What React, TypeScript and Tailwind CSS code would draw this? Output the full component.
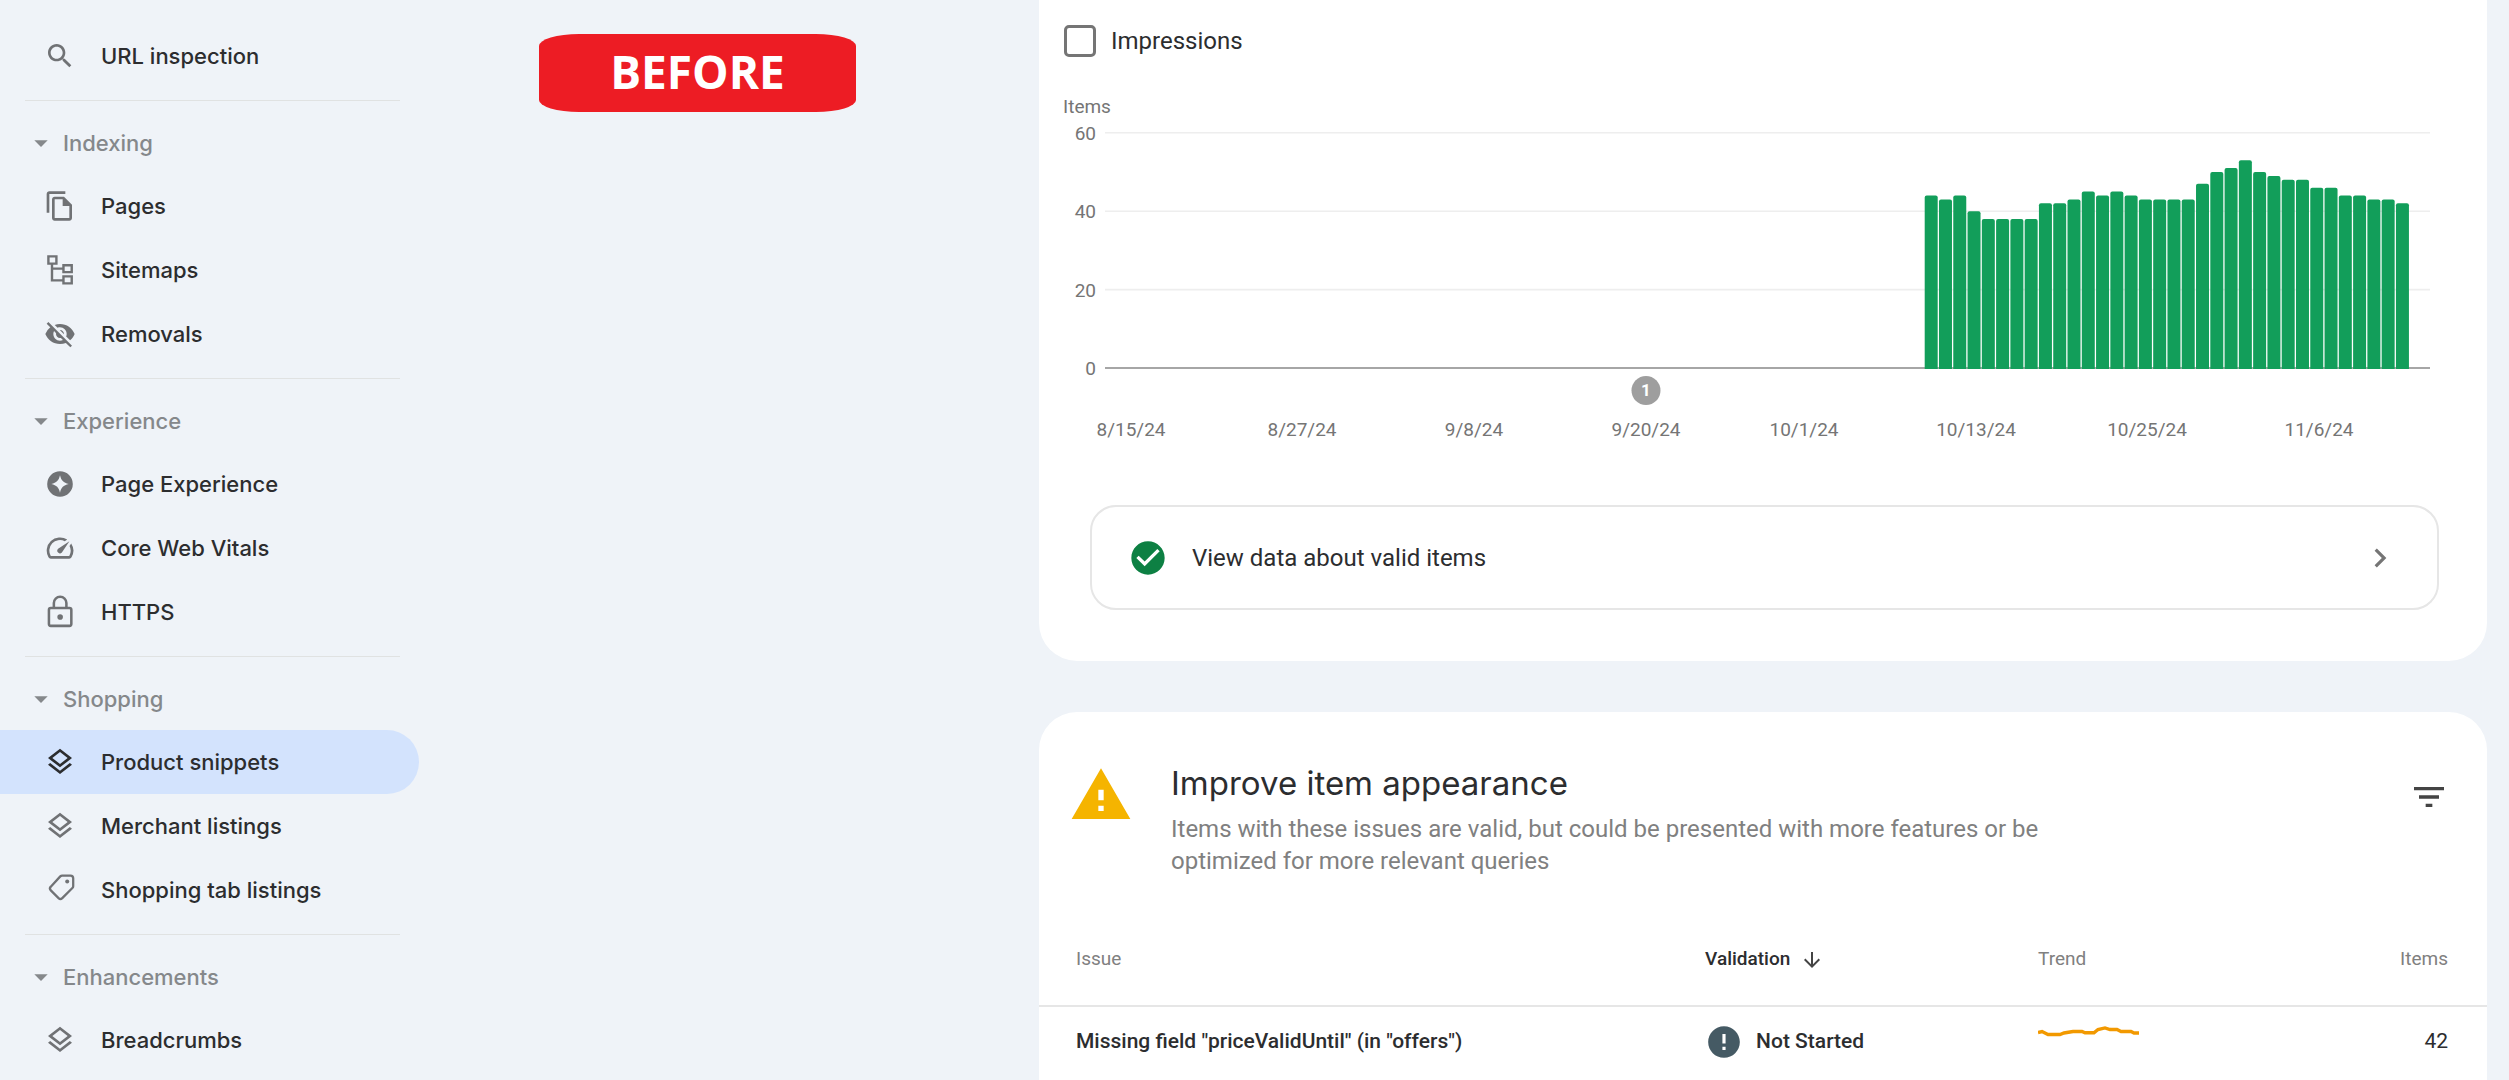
import React from 'react';
import {
  MdArrowDownward,
  MdArrowDropDown,
  MdCheckCircle,
  MdChevronRight,
  MdError,
  MdFilterList,
  MdVisibilityOff,
  MdWarning,
} from 'react-icons/md';

const ICON_PATHS = {
  search:
    'M15.5 14h-.79l-.28-.27C15.41 12.59 16 11.11 16 9.5 16 5.91 13.09 3 9.5 3S3 5.91 3 9.5 5.91 16 9.5 16c1.61 0 3.09-.59 4.23-1.57l.27.28v.79l5 4.99L20.49 19l-4.99-5zm-6 0C7.01 14 5 11.99 5 9.5S7.01 5 9.5 5 14 7.01 14 9.5 11.99 14 9.5 14z',
  pages:
    'M16 1H4c-1.1 0-2 .9-2 2v14h2V3h12V1zm-1 4H8c-1.1 0-1.99.9-1.99 2L6 21c0 1.1.89 2 1.99 2H19c1.1 0 2-.9 2-2V11l-6-6zM8 21V7h6v5h5v9H8z',
  speed:
    'M20.38 8.57l-1.23 1.85a8 8 0 0 1-.22 7.58H5.07A8 8 0 0 1 15.58 6.85l1.85-1.23A10 10 0 0 0 3.35 19a2 2 0 0 0 1.72 1h13.85a2 2 0 0 0 1.74-1 10 10 0 0 0-.27-10.44zm-9.79 6.84a2 2 0 0 0 2.83 0l5.66-8.49-8.49 5.66a2 2 0 0 0 0 2.83z',
  layers:
    'M11.99 18.54l-7.37-5.73L3 14.07l9 7 9-7-1.63-1.27zM12 16l7.36-5.73L21 9l-9-7-9 7 1.63 1.27L12 16zm0-11.47L17.74 9 12 13.47 6.26 9 12 4.53z',
  star: 'M12 2.4a9.6 9.6 0 1 0 0 19.2 9.6 9.6 0 0 0 0-19.2zm0 3.1c.9 3.9 2.6 5.6 6.5 6.5-3.9.9-5.6 2.6-6.5 6.5-.9-3.9-2.6-5.6-6.5-6.5 3.9-.9 5.6-2.6 6.5-6.5z',
};

const PathIcon = ({ d }: { d: string }) => (
  <svg viewBox="0 0 24 24" className="size-8" fill="currentColor" aria-hidden="true">
    <path d={d} />
  </svg>
);

const SitemapIcon = () => (
  <svg viewBox="0 0 24 24" className="size-8" fill="none" stroke="currentColor" strokeWidth="1.8" aria-hidden="true">
    <path d="M3.3 1.8h6v5.4h-6zM14.6 8.4h6.2v5.2h-6.2zM14.6 16.8h6.2v5.2h-6.2zM6 7.2v12.6h8.6M6 11h8.6" />
  </svg>
);

const LockIcon = () => (
  <svg viewBox="0 0 24 24" className="size-8 overflow-visible" fill="none" stroke="currentColor" strokeWidth="1.9" aria-hidden="true">
    <rect x="3.7" y="9" width="16.8" height="13.4" rx="1.4" />
    <path d="M7.4 9V5.3a4.7 4.7 0 0 1 9.4 0V9" />
    <circle cx="12.1" cy="15.7" r="2.1" fill="currentColor" stroke="none" />
  </svg>
);

const TagIcon = () => (
  <svg viewBox="0 0 24 24" className="size-8 overflow-visible" fill="none" stroke="currentColor" strokeWidth="1.7" aria-hidden="true">
    <path d="M13.6 1.2h6.3a2 2 0 0 1 2 2v5.9a2 2 0 0 1-.6 1.4l-7.6 7.6a2 2 0 0 1-2.8 0l-5.8-5.8a2 2 0 0 1 0-2.8L12.2 1.8a2 2 0 0 1 1.4-.6z" />
    <circle cx="17.4" cy="5.7" r="1.5" fill="currentColor" stroke="none" />
  </svg>
);

const SECTIONS = [
  {
    title: 'Indexing',
    items: [
      { label: 'Pages', icon: <PathIcon d={ICON_PATHS.pages} /> },
      { label: 'Sitemaps', icon: <SitemapIcon /> },
      { label: 'Removals', icon: <MdVisibilityOff className="size-8" /> },
    ],
  },
  {
    title: 'Experience',
    items: [
      { label: 'Page Experience', icon: <PathIcon d={ICON_PATHS.star} /> },
      { label: 'Core Web Vitals', icon: <PathIcon d={ICON_PATHS.speed} /> },
      { label: 'HTTPS', icon: <LockIcon /> },
    ],
  },
  {
    title: 'Shopping',
    items: [
      { label: 'Product snippets', icon: <PathIcon d={ICON_PATHS.layers} />, active: true },
      { label: 'Merchant listings', icon: <PathIcon d={ICON_PATHS.layers} /> },
      { label: 'Shopping tab listings', icon: <TagIcon /> },
    ],
  },
  {
    title: 'Enhancements',
    items: [{ label: 'Breadcrumbs', icon: <PathIcon d={ICON_PATHS.layers} /> }],
  },
];

const BARS = [
  44, 43, 44, 40, 38, 38, 38, 38, 42, 42, 43, 45, 44, 45, 44, 43, 43, 43, 43, 47, 50, 51, 53, 50, 49, 48, 48, 46, 46,
  44, 44, 43, 43, 42,
];

const DATES = [
  { label: '8/15/24', x: 67 },
  { label: '8/27/24', x: 238 },
  { label: '9/8/24', x: 410 },
  { label: '9/20/24', x: 582 },
  { label: '10/1/24', x: 740 },
  { label: '10/13/24', x: 912 },
  { label: '10/25/24', x: 1083 },
  { label: '11/6/24', x: 1255 },
];

const BASELINE = 278;
const UNIT = 3.92;

type NavItemProps = { label: string; icon: React.ReactNode; active?: boolean };

const NavItem = ({ label, icon, active }: NavItemProps) => (
  <a
    href="#"
    aria-current={active ? 'page' : undefined}
    className={`flex h-16 items-center gap-[25px] rounded-r-full pl-11 text-[22px] font-medium text-[#2c2d2f] ${
      active ? 'bg-[#d3e3fd]' : ''
    }`}
  >
    <span className={active ? 'text-[#2c2d2f]' : 'text-[#707275]'}>{icon}</span>
    {label}
  </a>
);

const Sidebar = () => (
  <nav className="w-[419px] shrink-0 pt-6 font-['Inter',sans-serif]" aria-label="Search Console">
    <NavItem label="URL inspection" icon={<PathIcon d={ICON_PATHS.search} />} />
    {SECTIONS.map((section) => (
      <section key={section.title}>
        <hr className="mt-3 mr-[19px] mb-[11px] ml-[25px] border-t border-[#e0e2e2]" />
        <button className="flex h-[62px] w-full items-center gap-[6px] pl-[25px] text-[22px] font-medium text-[#85888b]">
          <MdArrowDropDown className="size-8" />
          {section.title}
        </button>
        {section.items.map((item) => (
          <NavItem key={item.label} {...item} />
        ))}
      </section>
    ))}
  </nav>
);

const ItemsChart = () => (
  <svg viewBox="0 0 1398 360" className="block h-auto w-full" role="img" aria-label="Items per day">
    <g fill="#757575" fontSize="19">
      <text x="-1" y="23">Items</text>
      {[60, 40, 20, 0].map((tick) => (
        <text key={tick} x="32" y={BASELINE - tick * UNIT + 7} textAnchor="end">
          {tick}
        </text>
      ))}
      {DATES.map((date) => (
        <text key={date.label} x={date.x} y="346" textAnchor="middle">
          {date.label}
        </text>
      ))}
    </g>
    {[60, 40, 20].map((tick) => (
      <path key={tick} d={`M41 ${BASELINE - tick * UNIT}H1366`} stroke="#eeeeee" strokeWidth="1.6" />
    ))}
    <path d={`M41 ${BASELINE}H1366`} stroke="#a6a6a6" strokeWidth="2" />
    {BARS.map((value, i) => {
      const x = 860.7 + i * 14.28;
      const top = BASELINE - value * UNIT;
      return (
        <path
          key={i}
          d={`M${x} ${BASELINE + 1}V${top + 2}q0 -2 2 -2h9q2 0 2 2V${BASELINE + 1}z`}
          fill="#129e5a"
        />
      );
    })}
    <circle cx="582" cy="300.5" r="14.5" fill="#9e9e9e" />
    <text x="582" y="306" textAnchor="middle" fontSize="17" fontWeight="700" fill="#ffffff">
      1
    </text>
  </svg>
);

const ChartCard = () => (
  <section className="rounded-b-[38px] bg-white pb-[51px]">
    <div className="px-[25px] pt-6">
      <label className="flex h-[34px] w-fit items-center gap-[15px] text-2xl text-[#2c2d2f]">
        <input type="checkbox" className="size-8 appearance-none rounded-[5px] border-3 border-[#757575]" />
        Impressions
      </label>
      <div className="mt-8">
        <ItemsChart />
      </div>
    </div>
    <a
      href="#"
      className="mt-[55px] mr-12 ml-[51px] flex h-[105px] items-center rounded-[26px] border-2 border-[#e6e6e6] pr-[38px] pl-9 text-2xl text-[#2c2d2f]"
    >
      <MdCheckCircle className="size-10 text-[#0d8043]" />
      <span className="ml-6 flex-1">View data about valid items</span>
      <MdChevronRight className="size-[38px] text-[#757575]" />
    </a>
  </section>
);

const IssuesCard = () => (
  <section className="mt-[51px] flex-1 rounded-t-[38px] bg-white pt-[51px]">
    <div className="flex items-start pr-[38px] pl-[30px]">
      <MdWarning className="size-16 shrink-0 text-[#f5b400]" />
      <div className="ml-[38px] flex-1">
        <h2 className="font-['Inter',sans-serif] text-[33px] leading-10 text-[#2c2d2f]">Improve item appearance</h2>
        <p className="mt-[10px] max-w-[900px] text-2xl leading-8 text-[#808080]">
          Items with these issues are valid, but could be presented with more features or be optimized for more relevant
          queries
        </p>
      </div>
      <button aria-label="Filter" className="mt-[14px]">
        <MdFilterList className="size-10 text-[#444444]" />
      </button>
    </div>
    <table className="mt-[37px] w-full table-fixed text-left text-[#2c2d2f]">
      <thead>
        <tr className="h-[92px] border-b-2 border-[#e6e6e6] text-[19px] text-[#808080]">
          <th className="w-[46%] pl-[37px] font-normal">Issue</th>
          <th className="w-[23%] font-medium text-[#2c2d2f]" aria-sort="descending">
            <button className="flex items-center gap-[10px]">
              Validation
              <MdArrowDownward className="size-6 text-[#444444]" />
            </button>
          </th>
          <th className="font-normal">Trend</th>
          <th className="pr-[39px] text-right font-normal">Items</th>
        </tr>
      </thead>
      <tbody>
        <tr className="h-[70px] text-[21px]">
          <td className="pl-[37px] font-medium">Missing field "priceValidUntil" (in "offers")</td>
          <td className="font-medium">
            <span className="flex items-center gap-[13px]">
              <MdError className="size-[38px] text-[#455a64]" />
              Not Started
            </span>
          </td>
          <td>
            <svg viewBox="0 0 101 32" className="h-8 w-[101px]" fill="none" stroke="#f29900" strokeWidth="3.4" aria-hidden="true">
              <path d="M0 6.5L4 5.5L10 8.5H22L26 7L35 5.5H44L47 6.8H56L60 3.5L67 1.9L72 3.5H79L83 5.5H93L96 7H101" />
            </svg>
          </td>
          <td className="pr-[39px] text-right">42</td>
        </tr>
      </tbody>
    </table>
  </section>
);

export default function App() {
  return (
    <div className="flex h-screen overflow-hidden bg-[#eff3f8] font-['Roboto',sans-serif]">
      <Sidebar />
      <div className="w-[620px] shrink-0 pt-[34px] pl-[120px]">
        <div className="flex h-[78px] w-[317px] items-center justify-center rounded-[40px_/_12px] bg-[#ed1c24] pb-1 font-['Open_Sans',sans-serif] text-[46px] font-bold text-white">
          BEFORE
        </div>
      </div>
      <main className="mr-[22px] flex min-w-0 flex-1 flex-col">
        <ChartCard />
        <IssuesCard />
      </main>
    </div>
  );
}
